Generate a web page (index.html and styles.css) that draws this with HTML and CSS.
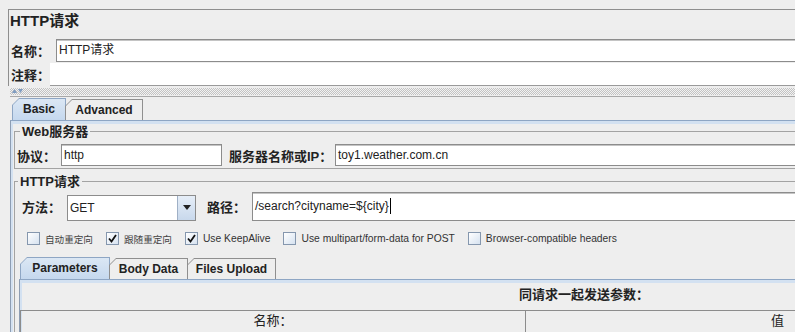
FILE: index.html
```html
<!DOCTYPE html>
<html lang="zh">
<head>
    <meta charset="UTF-8">
    <title>HTTP请求</title>
    <link rel="stylesheet" href="styles.css">
</head>
<body>
<div class="page">
    <div class="header">
        <h1 class="title">HTTP请求</h1>
        <div class="name-row">
            <label class="label name-label">名称：</label>
            <div class="field name-field">HTTP请求</div>
        </div>
        <div class="comment-row">
            <label class="label comment-label">注释：</label>
            <div class="comment-field"></div>
        </div>
    </div>

    <div class="splitter">
        <div class="dots">
            <svg class="arrows" width="12" height="5" viewBox="0 0 12 5">
                <path d="M0 5 L2.5 1 L5 5 Z" fill="#7f9cc0"/>
                <path d="M6 1 L11 1 L8.5 5 Z" fill="#7f9cc0"/>
            </svg>
        </div>
    </div>

    <div class="tab-strip outer-tabs">
        <div class="tab active"><span>Basic</span></div>
        <div class="tab"><span>Advanced</span></div>
    </div>
    <div class="tab-panel outer-panel">
        <fieldset class="group">
            <legend>Web服务器</legend>
            <div class="row server-row">
                <label class="label proto-label">协议：</label>
                <div class="field proto-field">http</div>
                <label class="label host-label">服务器名称或IP：</label>
                <div class="field host-field">toy1.weather.com.cn</div>
            </div>
        </fieldset>

        <fieldset class="group request-group">
            <legend>HTTP请求</legend>
            <div class="row method-row">
                <label class="label method-label">方法：</label>
                <div class="select">
                    <div class="select-value">GET</div>
                    <div class="select-button">
                        <svg width="8" height="5" viewBox="0 0 8 5"><path d="M0 0 L8 0 L4 5 Z" fill="#222"/></svg>
                    </div>
                </div>
                <label class="label path-label">路径：</label>
                <div class="field path-field">/search?cityname=${city}<span class="caret"></span></div>
            </div>

            <div class="checks">
                <div class="check"><span class="box"></span><span class="cn">自动重定向</span></div>
                <div class="check"><span class="box checked"><svg width="9" height="9" viewBox="0 0 9 9"><path d="M1 4.5 L3.5 7.5 L8 1" stroke="#111" stroke-width="1.8" fill="none"/></svg></span><span class="cn">跟随重定向</span></div>
                <div class="check"><span class="box checked"><svg width="9" height="9" viewBox="0 0 9 9"><path d="M1 4.5 L3.5 7.5 L8 1" stroke="#111" stroke-width="1.8" fill="none"/></svg></span><span>Use KeepAlive</span></div>
                <div class="check"><span class="box"></span><span>Use multipart/form-data for POST</span></div>
                <div class="check"><span class="box"></span><span>Browser-compatible headers</span></div>
            </div>

            <div class="tab-strip inner-tabs">
                <div class="tab active"><span>Parameters</span></div>
                <div class="tab"><span>Body Data</span></div>
                <div class="tab"><span>Files Upload</span></div>
            </div>
            <div class="tab-panel inner-panel">
                <div class="params-title">同请求一起发送参数：</div>
                <div class="table-head">
                    <div class="col">名称：</div>
                    <div class="col">值</div>
                </div>
            </div>
        </fieldset>
    </div>
</div>
</body>
</html>
```

FILE: styles.css
```css
* {
    box-sizing: border-box;
}
html, body {
    margin: 0;
    overflow: hidden;
}
body {
    background: #eeeeee;
    font-family: "Liberation Sans", "Noto Sans CJK SC", sans-serif;
    font-size: 12px;
    color: #222;
}
.page {
    width: 1200px;
    height: 332px;
}

/* top: title, name, comment */
.header {
    margin: 9px 0 0 8px;
    border-top: 1px solid #8e8e8e;
    border-left: 1px solid #8e8e8e;
}
.title {
    margin: 0;
    height: 29px;
    padding: 1px 0 0 1px;
    font-size: 15px;
    line-height: 20px;
    font-weight: bold;
    color: #222;
}
.label {
    font-family: "Liberation Sans", "Noto Sans CJK SC", sans-serif;
    font-size: 13px;
    font-weight: bold;
    color: #222;
    white-space: nowrap;
}
.field {
    background: #fff;
    border: 1px solid #8c8c8c;
    box-shadow: inset 0 1px 0 #c4c4c4;
    height: 22px;
    line-height: 20px;
    padding-left: 2px;
    font-size: 12px;
    color: #222;
    white-space: nowrap;
}
.name-row {
    display: flex;
    align-items: center;
    height: 23px;
}
.name-label {
    width: 47px;
    padding-left: 2px;
}
.name-field {
    flex: 1;
    height: 23px;
    line-height: 21px;
}
.comment-row {
    display: flex;
    align-items: center;
    height: 24px;
}
.comment-label {
    width: 41px;
    padding-left: 2px;
}
.comment-field {
    flex: 1;
    align-self: stretch;
    margin-top: 1px;
    background: #fff;
    border-bottom: 1px solid #9a9a9a;
}

/* splitter */
.splitter {
    height: 11px;
    margin-left: 10px;
    padding-top: 2px;
    border-bottom: 1px solid #a8a8a8;
}
.dots {
    height: 7px;
    background: repeating-conic-gradient(#c2c2c2 0 25%, #f2f2f2 0 50%) 0 0 / 2px 2px;
}
.arrows {
    display: block;
    margin-left: 2px;
}

/* tabs */
.tab-strip {
    display: flex;
    align-items: flex-end;
    height: 22px;
}
.outer-tabs {
    margin: 1px 0 0 12px;
}
.tab {
    height: 21px;
    padding: 1px 1px 0 1px;
    background: #8f8f8f;
    clip-path: polygon(0 7px, 7px 0, 100% 0, 100% 100%, 0 100%);
    margin-right: -1px;
}
.tab span {
    display: block;
    height: 100%;
    padding: 0;
    text-align: center;
    white-space: nowrap;
    background: #eeeeee;
    clip-path: polygon(0 6px, 6px 0, 100% 0, 100% 100%, 0 100%);
    font-size: 12px;
    font-weight: bold;
    line-height: 20px;
    color: #222;
}
.tab.active {
    height: 22px;
    background: #8ea6c4;
}
.tab.active span {
    background: linear-gradient(#dbe7f4, #c5d8ee);
}
.outer-tabs .tab.active {
    width: 54px;
}
.outer-tabs .tab:nth-child(2) {
    width: 78px;
}
.tab-panel {
    border-top: 1px solid #8ea6c4;
    border-left: 1px solid #8d9db3;
    background: linear-gradient(#d3e1f1, #d3e1f1) 0 0 / 100% 3px no-repeat, #eeeeee;
    box-shadow: inset 2px 0 0 #d3e1f1;
}
.outer-panel {
    margin-left: 10px;
    padding: 3px 0 0 3px;
    height: 220px;
}

/* titled groups */
.group {
    margin: 0;
    padding: 5px 0 2px 2px;
    border: 1px solid #a3a3a3;
    border-right: none;
    min-width: 0;
}
.group legend {
    margin-left: 3px;
    padding: 0 2px;
    font-size: 13px;
    font-weight: bold;
    line-height: 15px;
    color: #222;
}
.request-group {
    margin-top: 5px;
    padding: 2px 0 0 0;
    border-bottom: none;
}
.row {
    display: flex;
    align-items: center;
}
.proto-label {
    width: 44px;
}
.proto-field {
    width: 161px;
}
.host-label {
    margin-left: 7px;
    width: 106px;
}
.host-field {
    flex: 1;
}

.method-row {
    height: 30px;
    padding-left: 7px;
}
.method-label {
    width: 45px;
}
.select {
    display: flex;
    width: 129px;
    height: 26px;
    margin-top: 3px;
    border: 1px solid #8c8c8c;
    background: #fff;
}
.select-value {
    flex: 1;
    line-height: 24px;
    padding-left: 2px;
    font-size: 12px;
}
.select-button {
    width: 18px;
    display: flex;
    align-items: center;
    justify-content: center;
    border-left: 1px solid #9fb0c6;
    background: linear-gradient(#e6eef8, #c8d8ec);
}
.path-label {
    margin-left: 11px;
    width: 45px;
}
.path-field {
    flex: 1;
    height: 29px;
    line-height: 27px;
}
.caret {
    display: inline-block;
    width: 1px;
    height: 16px;
    background: #000;
    vertical-align: middle;
    margin-left: 1px;
}

/* checkboxes */
.checks {
    display: flex;
    align-items: center;
    margin: 10px 0 0 12px;
    height: 15px;
    font-size: 10.3px;
    color: #333;
}
.check {
    display: flex;
    align-items: center;
    gap: 5px;
    margin-right: 13px;
    white-space: nowrap;
}
.check .cn {
    font-size: 9.6px;
    color: #444;
}
.box {
    display: flex;
    align-items: center;
    justify-content: center;
    width: 13px;
    height: 13px;
    border: 1px solid #8597ae;
    background: linear-gradient(135deg, #ffffff, #d6e2f0);
}

/* parameters tabs */
.inner-tabs {
    margin: 11px 0 0 5px;
}
.inner-tabs .tab.active {
    width: 90px;
}
.inner-tabs .tab:nth-child(2) {
    width: 79px;
}
.inner-tabs .tab:nth-child(3) {
    width: 89px;
}
.inner-panel {
    margin-left: 4px;
    width: 1121px;
    height: 60px;
    padding-top: 7px;
}
.params-title {
    text-align: center;
    font-size: 13px;
    font-weight: bold;
    line-height: 16px;
    height: 23px;
    padding-left: 8px;
    color: #222;
}
.table-head {
    display: flex;
    width: 1009px;
    border-top: 1px solid #8c8c8c;
    border-left: 1px solid #8c8c8c;
    height: 24px;
}
.col {
    width: 504px;
    text-align: center;
    font-size: 13px;
    line-height: 20px;
    color: #222;
}
.col + .col {
    border-left: 1px solid #8c8c8c;
}
```
